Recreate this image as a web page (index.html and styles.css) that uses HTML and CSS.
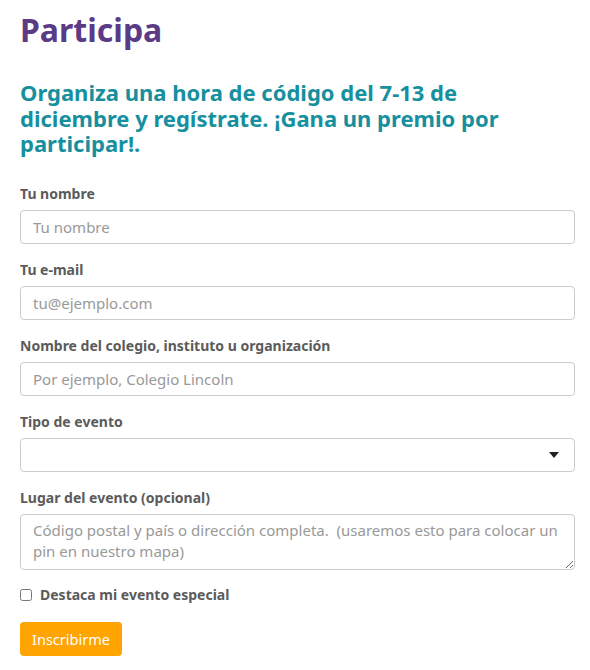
FILE: index.html
```html
<!DOCTYPE html>
<html lang="es">
<head>
<meta charset="utf-8">
<title>Participa</title>
<link rel="stylesheet" href="styles.css">
</head>
<body>
<main class="page">
  <h1 class="title">Participa</h1>
  <h2 class="intro">Organiza una hora de código del 7-13 de diciembre y regístrate. ¡Gana un premio por participar!.</h2>
  <form class="form">
    <div class="field">
      <label class="label" for="name">Tu nombre</label>
      <input class="control" id="name" type="text" placeholder="Tu nombre">
    </div>
    <div class="field">
      <label class="label" for="email">Tu e-mail</label>
      <input class="control" id="email" type="text" placeholder="tu@ejemplo.com">
    </div>
    <div class="field">
      <label class="label" for="org">Nombre del colegio, instituto u organización</label>
      <input class="control" id="org" type="text" placeholder="Por ejemplo, Colegio Lincoln">
    </div>
    <div class="field">
      <label class="label" for="type">Tipo de evento</label>
      <div class="select" id="type">
        <svg class="caret" width="10" height="6" viewBox="0 0 10 6"><path d="M0 0h10L5 6z" fill="#222"/></svg>
      </div>
    </div>
    <div class="field field-last">
      <label class="label" for="loc">Lugar del evento (opcional)</label>
      <textarea class="control area" id="loc" placeholder="Código postal y país o dirección completa.  (usaremos esto para colocar un pin en nuestro mapa)"></textarea>
    </div>
    <label class="check">
      <input type="checkbox" class="check-box">
      <span>Destaca mi evento especial</span>
    </label>
    <button type="button" class="btn">Inscribirme</button>
  </form>
</main>
</body>
</html>
```
FILE: styles.css
```css
* { box-sizing: border-box; }
body {
  margin: 0;
  background: #fff;
  font-family: "Noto Sans", "Open Sans", sans-serif;
}
.page {
  padding: 10px 15px 0 20px;
}
.title {
  margin: 0;
  font-size: 32px;
  line-height: 40px;
  font-weight: 700;
  color: #5b3a86;
}
.intro {
  margin: 30px 0 0;
  max-width: 530px;
  font-size: 22px;
  line-height: 25.5px;
  font-weight: 700;
  color: #168f9e;
}
.form {
  margin-top: 27px;
  display: flex;
  flex-direction: column;
}
.field {
  display: flex;
  flex-direction: column;
  margin-bottom: 16px;
}
.field-last {
  margin-bottom: 15px;
}
.label {
  font-size: 14px;
  line-height: 20px;
  font-weight: 700;
  color: #5b5b5b;
  margin-bottom: 6px;
}
.control {
  width: 555px;
  height: 34px;
  border: 1px solid #ccc;
  border-radius: 4px;
  padding: 6px 12px;
  font-family: inherit;
  font-size: 15px;
  color: #555;
  background: #fff;
  outline: none;
}
.control::placeholder { color: #999; }
.area {
  height: 56px;
  line-height: 21.5px;
  padding: 5px 12px;
  resize: vertical;
}
.select {
  width: 555px;
  height: 34px;
  border: 1px solid #ccc;
  border-radius: 4px;
  display: flex;
  align-items: center;
  justify-content: flex-end;
  padding-right: 15px;
}
.check {
  display: flex;
  align-items: center;
  gap: 8px;
  font-size: 14px;
  line-height: 20px;
  font-weight: 700;
  color: #5b5b5b;
}
.check-box {
  margin: 0;
  width: 12px;
  height: 12px;
}
.btn {
  align-self: flex-start;
  margin-top: 17px;
  height: 34px;
  padding: 0 12px;
  border: none;
  border-radius: 4px;
  background: #ffa400;
  color: #fff;
  font-family: inherit;
  font-size: 14.5px;
}
```
